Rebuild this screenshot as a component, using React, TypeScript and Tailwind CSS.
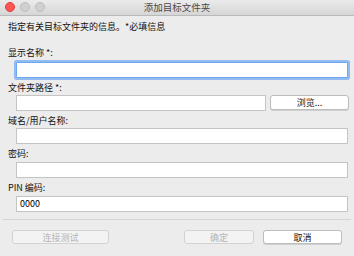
import React from "react";

const font = { fontFamily: '"Noto Sans CJK SC", "Noto Sans", sans-serif' };

function Field({ label, value, focused, gap = "pt-0" }: { label: string; value?: string; focused?: boolean; gap?: string }) {
  return (
    <div className="flex flex-col">
      <p className="pl-2 h-[14px] leading-[14px] text-[9px] text-[#111]">{label}</p>
      <div className={"pl-[16px] pr-[6px] " + gap}>
        <div
          className={
            focused
              ? "h-[16px] bg-white border border-[#6fa6ee] shadow-[0_0_0_2px_#92bbf1] rounded-[1px]"
              : "h-[16px] bg-white border border-[#c4c4c4] flex items-center px-[3px] text-[9px] text-black"
          }
        >
          {value}
        </div>
      </div>
    </div>
  );
}

export default function App() {
  return (
    <div style={font} className="w-[354px] h-[256px] bg-[#ececec] flex flex-col overflow-hidden">
      {/* title bar */}
      <div className="relative h-[16px] shrink-0 bg-gradient-to-b from-[#ebebeb] to-[#d6d6d6] border-b border-[#b9b9b9] flex items-center justify-center">
        <div className="absolute left-[5px] top-[2px] flex gap-[5px]">
          <span className="w-[10px] h-[10px] rounded-full bg-[#fc5753] border border-[#df3d39]" />
          <span className="w-[10px] h-[10px] rounded-full bg-[#d0d0d0] border border-[#bdbdbd]" />
          <span className="w-[10px] h-[10px] rounded-full bg-[#d0d0d0] border border-[#bdbdbd]" />
        </div>
        <span className="text-[9.5px] text-[#4a4a4a]">添加目标文件夹</span>
      </div>

      {/* body */}
      <div className="flex flex-col pt-[4px]">
        <p className="pl-2 h-[14px] leading-[14px] text-[9px] text-[#111]">指定有关目标文件夹的信息。*必填信息</p>
        <div className="h-[12px]" />
        <Field label="显示名称 *:" focused gap="pt-[2px]" />
        <div className="h-[3px]" />
        <div className="flex flex-col">
          <p className="pl-2 h-[14px] leading-[14px] text-[9px] text-[#111]">文件夹路径 *:</p>
          <div className="pl-[16px] pr-[5px] flex gap-[4px]">
            <div className="h-[16px] flex-1 bg-white border border-[#c4c4c4]" />
            <button className="w-[79px] h-[15px] rounded-[3px] bg-white border border-[#bdbdbd] shadow-[0_1px_0_#d0d0d0] text-[9px] text-[#111] leading-none">
              浏览...
            </button>
          </div>
        </div>
        <div className="h-[3px]" />
        <Field label="域名/用户名称:" />
        <div className="h-[3px]" />
        <Field label="密码:" gap="pt-[1px]" />
        <div className="h-[3px]" />
        <Field label="PIN 编码:" value="0000" gap="pt-[1px]" />
      </div>

      <div className="mt-[7px] mx-[3px] h-px bg-[#d4d4d4]" />

      <div className="flex items-center pt-[10px] pl-[12px] pr-[12px]">
        <button
          disabled
          className="w-[97px] h-[14px] rounded-[3px] bg-[#f3f3f3] border border-[#d2d2d2] text-[9px] text-[#b4b4b4] leading-none"
        >
          连接测试
        </button>
        <div className="flex-1" />
        <button
          disabled
          className="w-[70px] h-[14px] rounded-[3px] bg-[#f3f3f3] border border-[#d2d2d2] text-[9px] text-[#b4b4b4] leading-none"
        >
          确定
        </button>
        <button className="ml-[9px] w-[79px] h-[14px] rounded-[3px] bg-white border border-[#bdbdbd] shadow-[0_1px_0_#d0d0d0] text-[9px] text-[#111] leading-none">
          取消
        </button>
      </div>
    </div>
  );
}
